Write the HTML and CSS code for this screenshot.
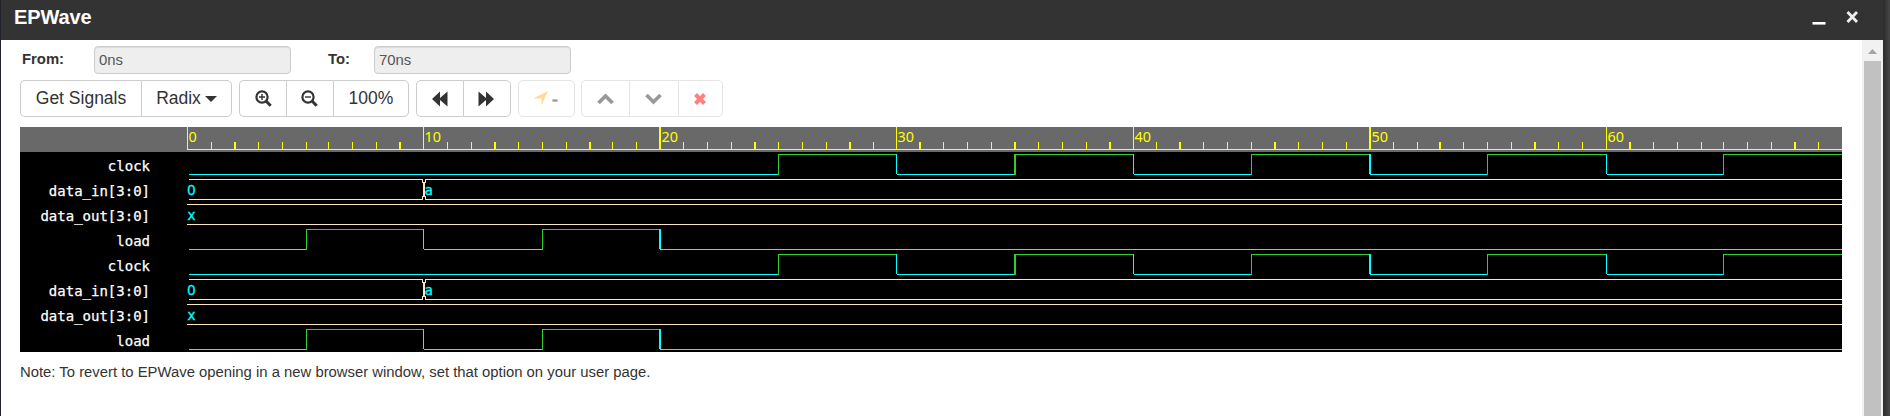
FILE: index.html
```html
<!DOCTYPE html>
<html lang="en">
<head>
<meta charset="utf-8">
<title>EPWave</title>
<link rel="stylesheet" href="styles.css">
</head>
<body>
<div class="window">
  <header class="titlebar">
    <h1 class="title">EPWave</h1>
    <svg class="window-controls" width="48" height="20" viewBox="0 0 48 20">
      <path d="M1.500 13h13v2.600h-13z" fill="#fff"/>
      <path d="M36.500 3L46 13M46 3L36.500 13" stroke="#eee" stroke-width="2.800"/>
    </svg>
  </header>
  <div class="body">
    <main class="content">
      <div class="range">
        <label class="range-label" for="from">From:</label>
        <input class="range-input" id="from" value="0ns" disabled>
        <label class="range-label range-label-to" for="to">To:</label>
        <input class="range-input" id="to" value="70ns" disabled>
      </div>
      <div class="toolbar">
        <div class="group">
          <button class="btn w-signals">Get Signals</button>
          <button class="btn w-radix">Radix<i class="caret"></i></button>
        </div>
        <div class="group">
          <button class="btn w-zoomin"><svg width="17" height="17" viewBox="0 0 17 17"><g fill="none" stroke="#333"><circle cx="7" cy="7" r="5.600" stroke-width="2.200"/><path d="M11 11l4.700 4.700" stroke-width="3"/><path d="M4 7h6M7 4v6" stroke-width="1.400"/></g></svg></button>
          <button class="btn w-zoomout"><svg width="17" height="17" viewBox="0 0 17 17"><g fill="none" stroke="#333"><circle cx="7" cy="7" r="5.600" stroke-width="2.200"/><path d="M11 11l4.700 4.700" stroke-width="3"/><path d="M4 7h6" stroke-width="1.400"/></g></svg></button>
          <button class="btn w-percent">100%</button>
        </div>
        <div class="group">
          <button class="btn w-step"><svg width="16" height="16" viewBox="0 0 16 16"><path d="M0 8L8 .5V7L15.500 .5v15L8 9v6.500z" fill="#333"/></svg></button>
          <button class="btn w-step2"><svg width="16" height="16" viewBox="0 0 16 16"><path d="M16 8L8 .5V7L.5 .5v15L8 9v6.500z" fill="#333"/></svg></button>
        </div>
        <div class="group faded">
          <button class="btn w-cursor"><svg width="15" height="15" viewBox="0 0 15 15"><path d="M15 0L8.500 14.500V7.500H0z" fill="#ffb733"/></svg><span class="dash">-</span></button>
        </div>
        <div class="group faded">
          <button class="btn w-up"><svg width="17" height="12" viewBox="0 0 17 12"><path d="M1.500 10l7-7 7 7" fill="none" stroke="#333" stroke-width="3.600"/></svg></button>
          <button class="btn w-down"><svg width="17" height="12" viewBox="0 0 17 12"><path d="M1.500 2l7 7 7-7" fill="none" stroke="#333" stroke-width="3.600"/></svg></button>
          <button class="btn w-remove"><svg width="12" height="12" viewBox="0 0 12 12"><path d="M1.500 1.500l9 9M10.500 1.500l-9 9" stroke="#f00" stroke-width="4"/></svg></button>
        </div>
      </div>
      <svg class="wave" id="wave" width="1822" height="225" viewBox="20 127 1822 225" shape-rendering="crispEdges"></svg>
      <p class="note">Note: To revert to EPWave opening in a new browser window, set that option on your user page.</p>
    </main>
    <div class="scrollbar">
      <svg class="arrow" width="9" height="5" viewBox="0 0 9 5"><path d="M4.500 0L9 5H0z" fill="#a3a3a3"/></svg>
      <div class="thumb"></div>
    </div>
  </div>
</div>
<script src="wave.js"></script>
</body>
</html>
```
FILE: styles.css
```css
* { box-sizing: border-box; }
html, body { height: 100%; }
body {
  margin: 0;
  padding: 0 7px 0 1px;
  overflow: hidden;
  background: linear-gradient(90deg, #22222c 1px, transparent 1px), linear-gradient(90deg, #2b2b2b 1883px, #444 1889px);
  font-family: "Liberation Sans", Arial, sans-serif;
  font-size: 14.85px;
  color: #333;
}
.window { display: flex; flex-direction: column; width: 1882px; height: 416px; background: #fff; }
.titlebar {
  display: flex;
  justify-content: space-between;
  align-items: flex-start;
  height: 40px;
  padding: 6px 24px 0 13px;
  background: #333;
}
.title { margin: 0; font-size: 20px; line-height: 23px; letter-spacing: -.1px; color: #fff; }
.window-controls { margin-top: 3px; }
.body { display: flex; flex: 1; }
.content { flex: 1; padding: 6px 0 0 19px; }
.range { display: flex; height: 28px; padding-left: 2px; }
.range-label { width: 72px; font-weight: bold; line-height: 26px; }
.range-label-to { width: 46px; margin-left: 37px; }
.range-input {
  width: 197px;
  height: 28px;
  padding: 0 4px;
  border: 1px solid #ccc;
  border-radius: 4px;
  background: #eee;
  box-shadow: inset 0 1px 1px rgba(0, 0, 0, .075);
  color: #555;
  font: inherit;
}
.toolbar { display: flex; margin-top: 6px; height: 37px; }
.group { display: flex; margin-right: 7px; }
.btn {
  display: flex;
  align-items: center;
  justify-content: center;
  height: 37px;
  padding: 0;
  border: 1px solid #ccc;
  border-right-width: 0;
  background: #fff;
  color: #333;
  font: 17.5px "Liberation Sans", Arial, sans-serif;
}
.btn:first-child { border-radius: 5px 0 0 5px; }
.btn:last-child { border-right-width: 1px; border-radius: 0 5px 5px 0; }
.btn:only-child { border-radius: 5px; }
.faded { margin-right: 6px; }
.faded .btn { opacity: .5; }
.caret { margin-left: 4px; border: 6px solid transparent; border-top: 6px solid #333; border-bottom: 0; }
.dash { margin-left: 4px; padding-top: 3px; font-size: 19px; -webkit-text-stroke: .5px #333; }
.w-signals { width: 121px; }
.w-radix { width: 91px; }
.w-zoomin { width: 47px; }
.w-zoomout { width: 47px; padding-right: 1px; }
.w-percent { width: 76px; }
.w-step { width: 47px; }
.w-step2 { width: 48px; padding-right: 3px; }
.w-cursor { width: 57px; padding-right: 2px; }
.w-up { width: 48px; }
.w-down { width: 49px; padding-right: 2px; }
.w-remove { width: 45px; padding-right: 2px; }
.wave { display: block; margin-top: 10px; background: #000; }
.wave text { font-family: "DejaVu Sans Mono", monospace; font-size: 14px; }
.wave .digits { font-family: "Noto Sans", sans-serif; font-size: 14.4px; }
.ruler { fill: #696969; }
.tick { fill: #ff0; }
.low { fill: #0ff; }
.high { fill: #32cd32; }
.bus { fill: #ffe4c4; }
.cross { fill: none; stroke: #ffe4c4; }
.name { fill: #fff; stroke: #fff; stroke-width: .25px; text-anchor: end; }
.value { font-size: 15px; stroke: #0ff; stroke-width: .3px; }
.note { margin: 11px 0 0; line-height: 18px; }
.scrollbar { display: flex; flex-direction: column; align-items: center; width: 21px; background: #f1f1f1; }
.arrow { margin: 9px 0 7px; }
.thumb { flex: 1; width: 17px; background: #c1c1c1; }
```
FILE: wave.js
```javascript
const svg = document.getElementById('wave');
const END = 1842;
// Left pixel of every time unit on the ruler.
const ticks = [187, 211, 234, 258, 282, 306, 328, 352, 376, 399, 423, 447, 471, 494, 518, 542, 566, 589,
  612, 636, 659, 683, 707, 731, 754, 778, 802, 826, 849, 873, 896, 919, 943, 967, 991, 1014, 1038, 1062,
  1086, 1109, 1133, 1156, 1179, 1203, 1227, 1251, 1274, 1298, 1322, 1346, 1369, 1393, 1417, 1439, 1463,
  1487, 1511, 1534, 1558, 1582, 1606, 1629, 1653, 1677, 1701, 1723, 1747, 1771, 1794, 1818];
const wide = new Set([2, 9, 13, 17, 20, 24, 28, 31, 35, 39, 42, 46, 50, 53, 57, 61, 68]);

function add(tag, attrs, text) {
  const node = document.createElementNS('http://www.w3.org/2000/svg', tag);
  for (const key in attrs) node.setAttribute(key, attrs[key]);
  if (text) node.textContent = text;
  svg.appendChild(node);
}
const rect = (cls, x, y, width, height) => add('rect', { class: cls, x, y, width, height });
const label = (cls, x, y, text) => add('text', { class: cls, x, y }, text);

rect('ruler', 20, 127, 1822, 25);
rect('tick', 187, 149, END - 187, 1);
ticks.forEach((x, t) => {
  const major = t % 10 === 0;
  rect('tick', x, major ? 127 : 142, wide.has(t) ? 2 : 1, major ? 22 : 7);
  if (major) label('tick digits', x + (wide.has(t) ? 2.5 : 1.6), 142, String(t));
});

// Single-bit trace: starts low and toggles at each listed time.
function bit(name, y, edges) {
  label('name', 150, y + 17, name);
  let x = 189;
  let high = false;
  for (const t of edges) {
    const next = ticks[t];
    rect(high ? 'high' : 'low', x, high ? y : y + 20, next - x + 1, 1);
    high = !high;
    rect(high ? 'high' : 'low', next, y, wide.has(t) ? 2 : 1, high ? 21 : 20);
    x = next + 1;
  }
  rect(high ? 'high' : 'low', x, high ? y : y + 20, END - x, 1);
}

function bus(name, y, start, values) {
  label('name', 150, y + 17, name);
  let x = start;
  values.forEach(([t, value], i) => {
    const next = values[i + 1] ? ticks[values[i + 1][0]] : END;
    rect('bus', x, y, next - x, 1);
    rect('bus', x, y + 20, next - x, 1);
    if (i > 0) {
      add('path', { class: 'cross', d: `M${x - 2.5} ${y}v3h1v4h1v7h-1v3h-1v4M${x + .5} ${y}v3h-1v4h-1v7h1v3h1v4` });
    }
    const digit = /\d/.test(value);
    label(digit ? 'low value digits' : 'low value', ticks[t] + (i ? 1.6 : .2), y + 16, value);
    x = next + 2;
  });
}

for (const top of [154, 254]) {
  bit('clock', top, [25, 30, 35, 40, 45, 50, 55, 60, 65]);
  bus('data_in[3:0]', top + 25, 189, [[0, '0'], [10, 'a']]);
  bus('data_out[3:0]', top + 50, 187, [[0, 'x']]);
  bit('load', top + 75, [5, 10, 15, 20]);
}
```
